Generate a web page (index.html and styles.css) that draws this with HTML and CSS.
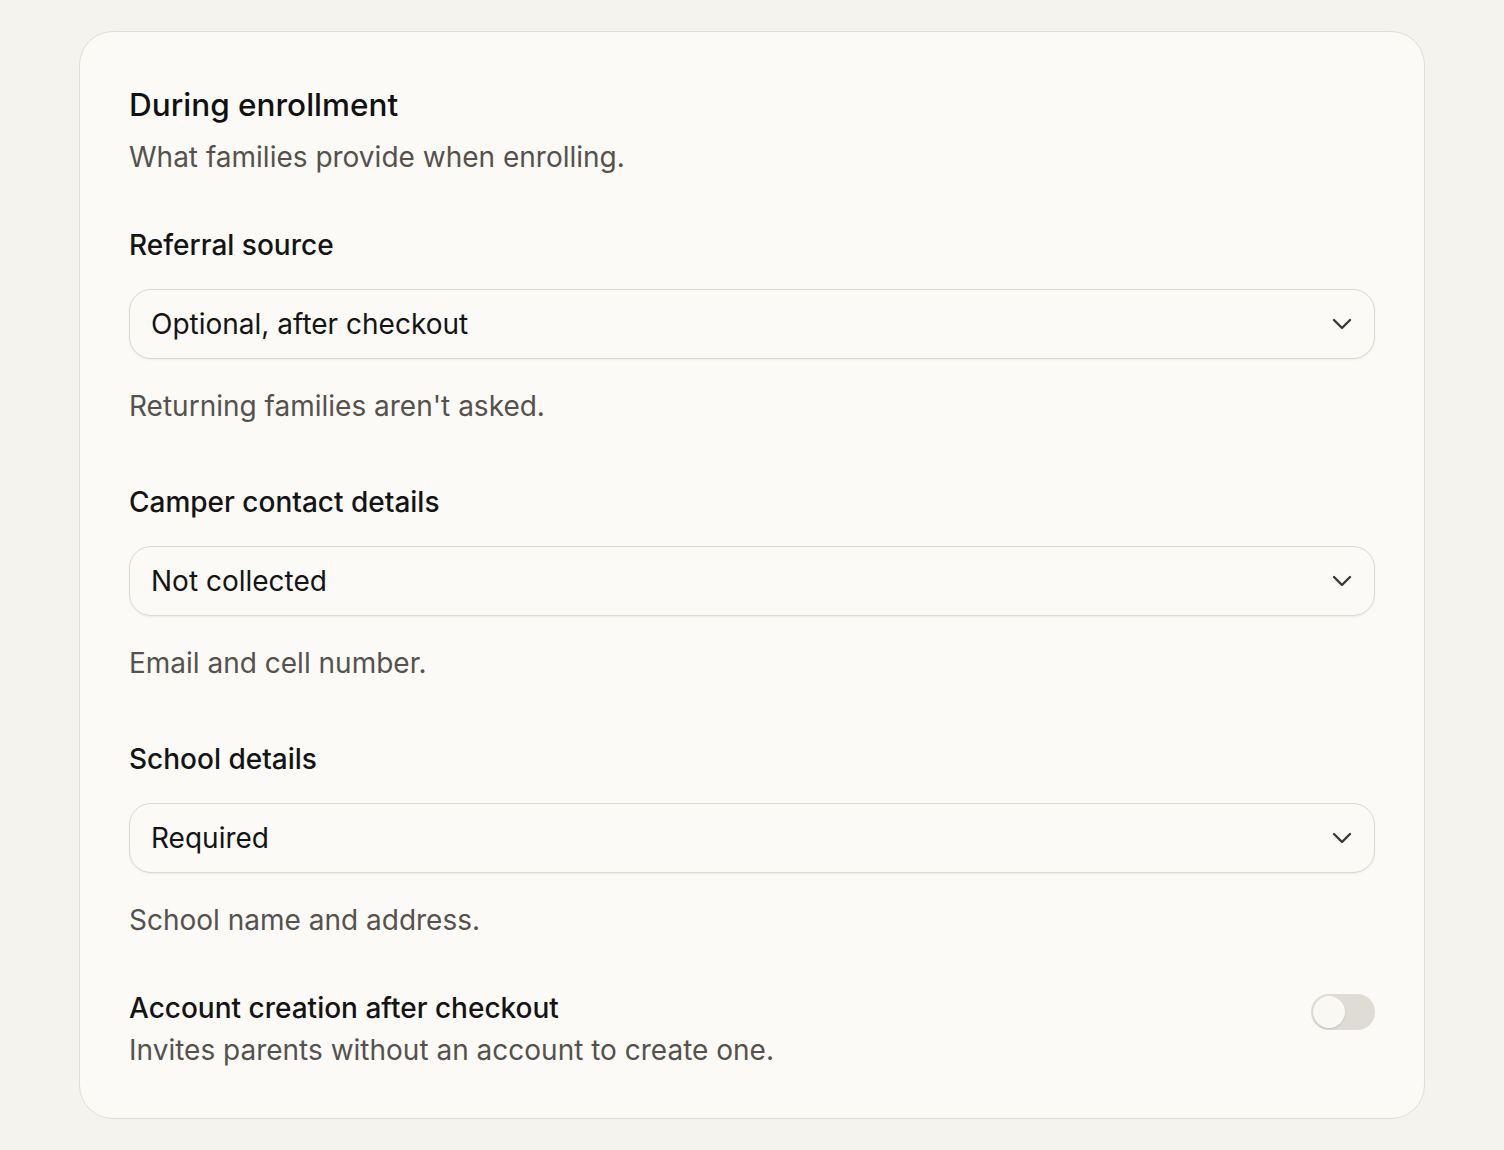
FILE: index.html
```html
<!DOCTYPE html>
<html>
  <head>
    <meta charset="utf-8">
    <title>During enrollment</title>
    <link rel="stylesheet" href="styles.css">
  </head>
  <body>
    <div class="card">
      <!-- header -->
      <h2 class="card-title">During enrollment</h2>
      <p class="card-sub">What families provide when enrolling.</p>

      <div class="field">
        <div class="field-label">Referral source</div>
        <div class="select">
          <span>Optional, after checkout</span>
          <svg class="chevron" viewBox="0 0 20 12" width="20" height="12"><path d="M2 2l8 8 8-8"/></svg>
        </div>
        <p class="field-help">Returning families aren't asked.</p>
      </div>

      <div class="field">
        <div class="field-label">Camper contact details</div>
        <div class="select">
          <span>Not collected</span>
          <svg class="chevron" viewBox="0 0 20 12" width="20" height="12"><path d="M2 2l8 8 8-8"/></svg>
        </div>
        <p class="field-help">Email and cell number.</p>
      </div>

      <div class="field">
        <div class="field-label">School details</div>
        <div class="select">
          <span>Required</span>
          <svg class="chevron" viewBox="0 0 20 12" width="20" height="12"><path d="M2 2l8 8 8-8"/></svg>
        </div>
        <p class="field-help">School name and address.</p>
      </div>

      <!-- toggle row -->
      <div class="toggle-row">
        <div>
          <div class="field-label">Account creation after checkout</div>
          <p class="toggle-help">Invites parents without an account to create one.</p>
        </div>
        <div class="toggle"><div class="knob"></div></div>
      </div>
    </div>
  </body>
</html>
```

FILE: styles.css
```css
body {
  margin: 0;
  padding: 31px 79px 31px 79px;
  background: #f5f3ed;
  font-family: Inter, "Noto Sans", sans-serif;
  color: #141414;
}
.card {
  background: #fbfaf6;
  border: 1px solid #e1ded6;
  border-radius: 34px;
  padding: 53px 49px 50px 49px;
}
.card-title {
  margin: 0;
  font-size: 31.5px;
  line-height: 40px;
  font-weight: 500;
  color: #111;
}
.card-sub {
  margin: 14px 0 0;
  font-size: 28px;
  line-height: 36px;
  color: #55524d;
}
.field {
  margin-top: 52px;
}
.field + .field {
  margin-top: 60px;
}
.field-label {
  font-size: 28px;
  line-height: 36px;
  font-weight: 500;
  color: #141414;
}
.select {
  margin-top: 26px;
  height: 70px;
  box-sizing: border-box;
  border: 1.5px solid #dcd9d1;
  border-radius: 22px;
  background: #fbfaf6;
  box-shadow: 0 1px 2px rgba(0, 0, 0, .06);
  display: flex;
  align-items: center;
  justify-content: space-between;
  padding: 0 22px 0 21px;
  font-size: 28px;
  color: #141414;
}
.chevron {
  fill: none;
  stroke: #3a3835;
  stroke-width: 2.4;
  stroke-linecap: round;
  stroke-linejoin: round;
}
.field-help {
  margin: 29px 0 0;
  font-size: 28px;
  line-height: 36px;
  color: #55524d;
}
/* 开关行 */
.toggle-row {
  margin-top: 52px;
  display: flex;
  justify-content: space-between;
  align-items: flex-start;
}
.toggle-help {
  margin: 6px 0 0;
  font-size: 28px;
  line-height: 36px;
  color: #55524d;
}
.toggle {
  margin-top: 4px;
  width: 64px;
  height: 36px;
  border-radius: 18px;
  background: #dfdcd5;
  padding: 2px;
  box-sizing: border-box;
}
.knob {
  width: 32px;
  height: 32px;
  border-radius: 50%;
  background: #faf8f3;
  box-shadow: 0 1px 2px rgba(0, 0, 0, .12);
}
```
